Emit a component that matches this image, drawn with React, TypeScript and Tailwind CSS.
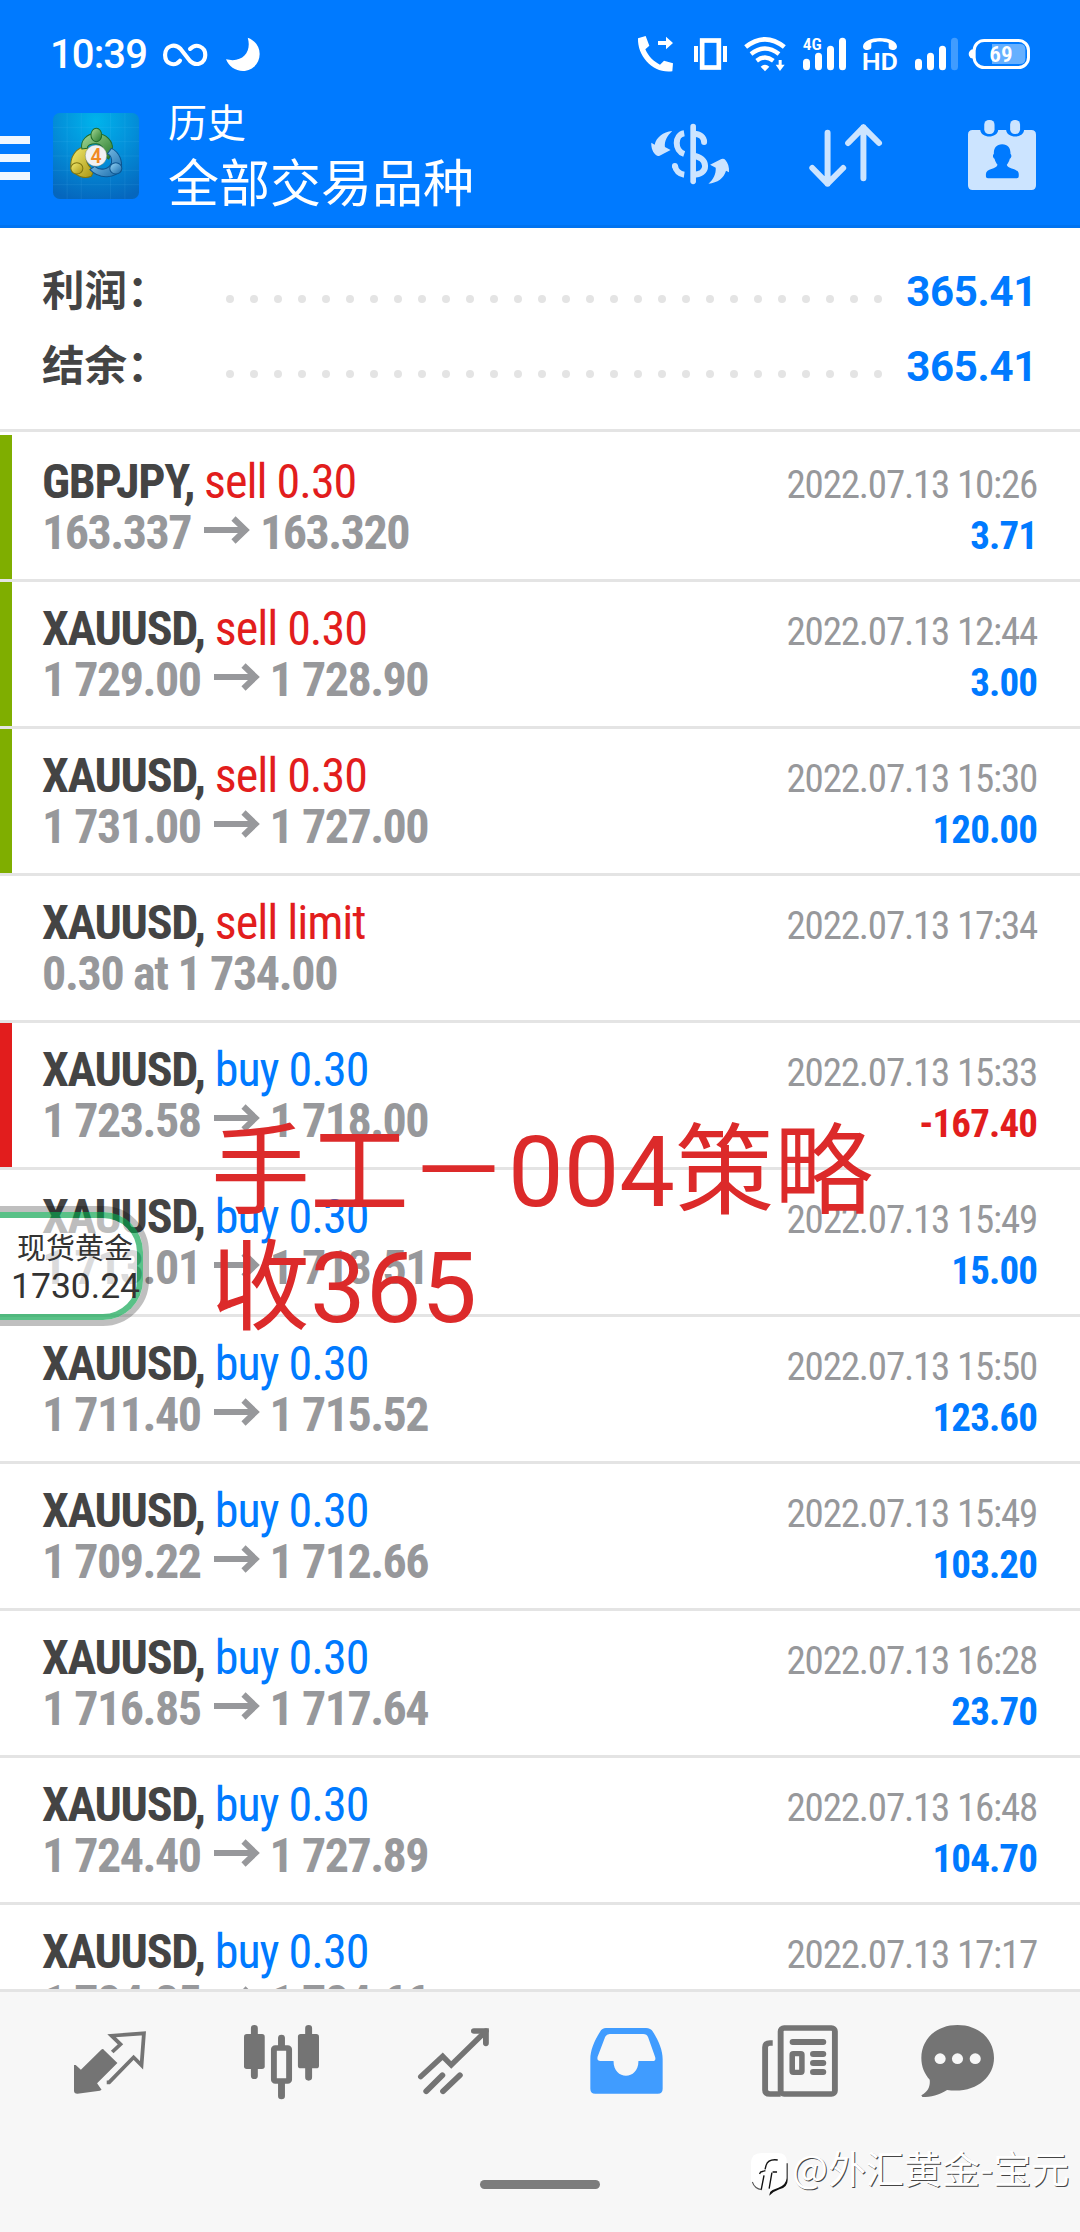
import { ReactNode } from "react";

type Deal = {
  symbol: string;
  action: string;
  side: "sell" | "buy";
  from: string;
  to?: string;
  time: string;
  profit?: string;
  mark?: "green" | "red";
};

const deals: Deal[] = [
  { symbol: "GBPJPY,", action: "sell 0.30", side: "sell", from: "163.337", to: "163.320", time: "2022.07.13 10:26", profit: "3.71", mark: "green" },
  { symbol: "XAUUSD,", action: "sell 0.30", side: "sell", from: "1 729.00", to: "1 728.90", time: "2022.07.13 12:44", profit: "3.00", mark: "green" },
  { symbol: "XAUUSD,", action: "sell 0.30", side: "sell", from: "1 731.00", to: "1 727.00", time: "2022.07.13 15:30", profit: "120.00", mark: "green" },
  { symbol: "XAUUSD,", action: "sell limit", side: "sell", from: "0.30 at 1 734.00", time: "2022.07.13 17:34" },
  { symbol: "XAUUSD,", action: "buy 0.30", side: "buy", from: "1 723.58", to: "1 718.00", time: "2022.07.13 15:33", profit: "-167.40", mark: "red" },
  { symbol: "XAUUSD,", action: "buy 0.30", side: "buy", from: "1 713.01", to: "1 713.51", time: "2022.07.13 15:49", profit: "15.00" },
  { symbol: "XAUUSD,", action: "buy 0.30", side: "buy", from: "1 711.40", to: "1 715.52", time: "2022.07.13 15:50", profit: "123.60" },
  { symbol: "XAUUSD,", action: "buy 0.30", side: "buy", from: "1 709.22", to: "1 712.66", time: "2022.07.13 15:49", profit: "103.20" },
  { symbol: "XAUUSD,", action: "buy 0.30", side: "buy", from: "1 716.85", to: "1 717.64", time: "2022.07.13 16:28", profit: "23.70" },
  { symbol: "XAUUSD,", action: "buy 0.30", side: "buy", from: "1 724.40", to: "1 727.89", time: "2022.07.13 16:48", profit: "104.70" },
  { symbol: "XAUUSD,", action: "buy 0.30", side: "buy", from: "1 724.35", to: "1 724.66", time: "2022.07.13 17:17" },
];

function Icon({ box, className, children }: { box: string; className: string; children: ReactNode }) {
  return (
    <svg viewBox={box} preserveAspectRatio="none" className={"block shrink-0 overflow-visible " + className} fill="none">
      {children}
    </svg>
  );
}

function StatusBar() {
  return (
    <div className="flex h-[108px] items-start pt-[35px] text-white">
      <span className="ml-[50px] w-[100px] whitespace-nowrap text-[40px] font-medium leading-[40px] tracking-[-0.9px]">10:39</span>
      <Icon box="475 105 127 120" className="ml-[13px] h-10 w-11">
        <path d="M524 182C508 202 481 192 481 165C481 138 508 128 526 147L553 183C571 201 597 190 597 165C597 140 571 128 553 147" stroke="#fff" strokeWidth="12" strokeLinecap="round" />
      </Icon>
      <Icon box="656 105 100 120" className="ml-[19px] h-10 w-[34px]">
        <path d="M720 113C742 121 755 141 755 162C755 191 733 213 706 213C683 213 664 199 656 178C706 190 732 156 720 113Z" fill="#fff" />
      </Icon>
      <Icon box="114 105 105 120" className="ml-[378px] h-10 w-[35px]">
        <path d="M114 115L137 108L148 137L136 148C146 170 160 184 180 194L192 182L219 190L217 214C160 222 112 170 114 115ZM174 123H198V110L219 129L198 148V135H174Z" fill="#fff" />
      </Icon>
      <Icon box="282 105 99 120" className="ml-[21px] h-10 w-[33px]">
        <path d="M282 138H294V186H282ZM369 138H381V186H369Z" fill="#fff" />
        <rect x="306.5" y="121.500" width="50" height="81" stroke="#fff" strokeWidth="14" />
      </Icon>
      <Icon box="432 105 126 120" className="ml-[17px] h-10 w-[42px]">
        <path d="M437 141Q495 95 553 141" stroke="#fff" strokeWidth="14" />
        <path d="M453 162Q495 129 537 162M470 182Q495 163 520 182" stroke="#fff" strokeWidth="13" />
        <path d="M482 200Q495 188 508 200L495 214ZM536 180H545V194H554L540 213L527 194H536Z" fill="#fff" />
      </Icon>
      <Icon box="609 105 129 120" className="ml-[17px] h-10 w-[43px]">
        <path d="M619.500 187V200M655.500 169V200M691.500 148V200M727.500 124V200" stroke="#fff" strokeWidth="21" strokeLinecap="round" />
        <text x="608" y="150" fill="#fff" fontSize="49" fontWeight="600" fontFamily="Roboto Condensed, sans-serif" textLength="57" lengthAdjust="spacingAndGlyphs">4G</text>
      </Icon>
      <Icon box="789 105 102 120" className="ml-[17px] h-10 w-[34px]">
        <path d="M789 140C789 105 891 105 891 140C891 153 866 153 866 142V129C850 123 830 123 814 129V142C814 153 789 153 789 140Z" fill="#fff" />
        <text x="785" y="210" fill="#fff" fontSize="73" fontWeight="600" fontFamily="Roboto, sans-serif" textLength="109" lengthAdjust="spacingAndGlyphs">HD</text>
      </Icon>
      <Icon box="945 105 129 120" className="ml-[18px] h-10 w-[43px]">
        <path d="M955.500 187V200M991.500 169V200M1027.500 148V200" stroke="#fff" strokeWidth="21" strokeLinecap="round" />
        <path d="M1063.500 124V200" stroke="#409cff" strokeWidth="21" strokeLinecap="round" />
      </Icon>
      <Icon box="1110 105 180 120" className="ml-3 h-10 w-[60px]">
        <path d="M1120 148A14 14 0 0 0 1120 176Z" fill="#fff" />
        <rect x="1122.500" y="121.500" width="163" height="81" rx="30" stroke="#fff" strokeWidth="9" />
        <path d="M1176 132H1260Q1276 132 1276 148V176Q1276 192 1260 192H1176Z" fill="#66b0ff" />
        <text x="1168" y="186" fill="#fff" fontSize="68" fontWeight="600" fontFamily="Roboto Condensed, sans-serif" textLength="70" lengthAdjust="spacingAndGlyphs">69</text>
      </Icon>
    </div>
  );
}

function AppLogo() {
  return (
    <Icon box="10 14 256 258" className="h-[86px] w-[86px]">
      <defs>
        <radialGradient id="tile" cx="0.5" cy="0.1" r="0.95">
          <stop offset="0" stopColor="#00b4ec" />
          <stop offset="0.45" stopColor="#0391da" />
          <stop offset="1" stopColor="#0566bd" />
        </radialGradient>
        <linearGradient id="green" x1="0" y1="0" x2="1" y2="1">
          <stop offset="0" stopColor="#a9dc9a" />
          <stop offset="1" stopColor="#23772a" />
        </linearGradient>
        <linearGradient id="yellow" x1="0" y1="0" x2="1" y2="1">
          <stop offset="0" stopColor="#f6ee72" />
          <stop offset="1" stopColor="#a79412" />
        </linearGradient>
        <linearGradient id="blue" x1="0" y1="0" x2="1" y2="1">
          <stop offset="0" stopColor="#9ad8f8" />
          <stop offset="1" stopColor="#1266a8" />
        </linearGradient>
      </defs>
      <rect x="10" y="14" width="256" height="258" rx="20" fill="url(#tile)" />
      <path d="M52 14V272M94 14V272M181 14V272M224 14V272M10 57H266M10 100H266M10 143H266M10 186H266M10 229H266" stroke="#7fd0ff" strokeOpacity="0.16" strokeWidth="2" />
      <g strokeWidth="3">
        <path d="M64 182C58 145 80 116 112 114L120 132C104 142 104 166 132 188L124 204C105 212 80 206 64 182Z" fill="url(#yellow)" stroke="#7d7410" />
        <path d="M96 122C90 96 112 76 138 74C168 76 190 98 187 124L176 152L158 140C166 120 152 106 138 106C122 106 112 112 112 120Z" fill="url(#green)" stroke="#1e6b2a" />
        <path d="M184 120C208 132 218 158 213 184C196 208 150 216 120 184L134 174C150 188 176 184 184 164C186 150 180 140 172 136Z" fill="url(#blue)" stroke="#0d5590" />
        <ellipse cx="139" cy="80" rx="16" ry="20" fill="url(#green)" stroke="#1e6b2a" />
        <ellipse cx="81" cy="180" rx="18" ry="17" fill="url(#yellow)" stroke="#7d7410" />
        <ellipse cx="197" cy="180" rx="18" ry="17" fill="url(#blue)" stroke="#0d5590" />
      </g>
      <circle cx="138" cy="142" r="32" fill="#f1f1f3" stroke="#3d5c44" strokeOpacity="0.5" strokeWidth="2" />
      <text x="138" y="163" textAnchor="middle" fill="#f08a24" fontSize="58" fontWeight="600" fontFamily="Roboto, sans-serif">4</text>
    </Icon>
  );
}

function TitleBar() {
  return (
    <div className="flex h-[117px] items-start text-white">
      <div className="mt-7 flex w-[30px] flex-col gap-[10px]">
        <div className="h-2 bg-[#f0f7ff]" />
        <div className="h-2 bg-[#f0f7ff]" />
        <div className="h-2 bg-[#f0f7ff]" />
      </div>
      <div className="ml-[23px] mt-[5px]">
        <AppLogo />
      </div>
      <div className="ml-[29px] flex w-[320px] flex-col whitespace-nowrap font-['Noto_Sans_CJK_SC',sans-serif]">
        <span className="-mt-[7px] text-[39px] leading-[39px]">历史</span>
        <span className="mt-[15px] text-[51px] leading-[51px]">全部交易品种</span>
      </div>
      <Icon box="152 360 235 216" className="ml-[163px] mt-3 h-[72px] w-[78px]">
        <path d="M279 380V544" stroke="#cce4ff" strokeWidth="17" strokeLinecap="round" />
        <path d="M252 400C222 405 222 452 252 462M224 496C226 512 238 522 252 524M279 401C300 400 312 412 312 426M279 467C302 470 315 482 315 498C315 514 302 524 279 524" stroke="#cce4ff" strokeWidth="18" />
        <circle cx="312" cy="426" r="9" fill="#cce4ff" />
        <circle cx="224" cy="498" r="9" fill="#cce4ff" />
        <path d="M216 393C188 396 168 412 163 434L153 428C152 444 158 458 168 466Q172 469 178 467L211 450L194 441C192 424 200 408 216 393ZM325 551C353 548 372 534 378 512L387 517C388 501 384 489 376 480Q372 475 364 477L330 494L347 503C348 521 341 537 325 551Z" fill="#cce4ff" />
      </Icon>
      <Icon box="628 360 220 216" className="ml-20 mt-3 h-[72px] w-[73px]">
        <path d="M684 398V551M638 504L684 551L731 504M792 535V382M746 429L792 382L839 429" stroke="#cce4ff" strokeWidth="18" strokeLinecap="round" strokeLinejoin="round" />
      </Icon>
      <Icon box="1103 357 205 216" className="ml-[86px] mt-[11px] h-[72px] w-[68px]">
        <path d="M1117 390H1140C1142 416 1192 416 1194 390H1218C1220 416 1270 416 1272 390H1294Q1308 390 1308 404V556Q1308 570 1294 570H1117Q1103 570 1103 556V404Q1103 390 1117 390Z" fill="#cce4ff" />
        <rect x="1152" y="360" width="31" height="42" rx="14" fill="#cce4ff" />
        <rect x="1230" y="360" width="30" height="42" rx="14" fill="#cce4ff" />
        <path d="M1206 433C1224 433 1232 446 1231 462C1235 464 1235 474 1229 476C1227 484 1223 490 1220 494C1222 508 1256 504 1256 522V529Q1256 535 1250 535H1163Q1157 535 1157 529V522C1157 504 1190 508 1192 494C1189 490 1185 484 1183 476C1177 474 1177 464 1181 462C1180 446 1188 433 1206 433Z" fill="#007aff" />
      </Icon>
    </div>
  );
}

function Summary() {
  return (
    <div className="flex h-[204px] flex-col border-b-[3px] border-[#e4e4e4] pt-[24px]">
      {["利润：", "结余："].map((label) => (
        <div key={label} className="flex h-[75px] items-center pl-[42px] pr-[43px]">
          <span className="-mt-[5px] w-[184px] whitespace-nowrap font-['Noto_Sans_CJK_SC',sans-serif] text-[42.5px] font-bold leading-[75px] text-[#444]">{label}</span>
          <div className="mt-[19px] flex gap-4">
            {Array.from({ length: 28 }, (_, i) => (
              <i key={i} className="h-2 w-2 rounded-full bg-[#e4e4e4]" />
            ))}
          </div>
          <span className="ml-auto mt-[3px] text-[42px] font-bold leading-[75px] tracking-[-0.3px] text-[#007aff]">365.41</span>
        </div>
      ))}
    </div>
  );
}

function DealRow({ deal, first }: { deal: Deal; first: boolean }) {
  const tone = deal.side === "sell" ? "text-[#e21d1d]" : "text-[#007aff]";
  const mark = deal.mark === "green" ? "bg-[#7fae00]" : deal.mark === "red" ? "bg-[#e21d1d]" : "bg-transparent";
  const profitTone = deal.profit?.startsWith("-") ? "text-[#e21d1d]" : "text-[#007aff]";
  return (
    <div className={"flex h-[147px] shrink-0 border-b-[3px] border-[#e4e4e4] font-['Roboto_Condensed',sans-serif] " + (first ? "mt-[3px]" : "")}>
      <div className={"w-3 " + mark} />
      <div className="flex flex-1 flex-col whitespace-nowrap pl-[30px] pr-[43px] pt-[21px]">
        <div className="flex h-[51px] items-baseline text-[48px] leading-[51px]">
          <span className="font-bold tracking-[-1.3px] text-[#444]">{deal.symbol}</span>
          <span className={"ml-[10px] tracking-[-1px] " + tone}>{deal.action}</span>
          <span className="ml-auto text-[39px] tracking-[-1.2px] text-[#97989b]">{deal.time}</span>
        </div>
        <div className="flex h-[51px] items-baseline text-[48px] font-bold leading-[51px] text-[#97989b]">
          <span className={deal.to ? "tracking-[-1.5px]" : "tracking-[-1.35px]"}>{deal.from}</span>
          {deal.to && (
            <>
              <Icon box="0 0 46 32" className="ml-[13px] mr-[10px] h-8 w-[46px]">
                <path d="M0 13H42M29.500 1.500L41.500 13L29.500 24.500" stroke="#97989b" strokeWidth="6" />
              </Icon>
              <span className="tracking-[-1.5px]">{deal.to}</span>
            </>
          )}
          <span className={"ml-auto text-[39px] tracking-[-0.9px] " + profitTone}>{deal.profit}</span>
        </div>
      </div>
    </div>
  );
}

function NavBar() {
  return (
    <div className="flex h-[243px] flex-col border-t-[3px] border-[#e4e4e4] bg-[#f7f7f7]">
      <div className="flex pl-[74px] pt-[33px]">
        <Icon box="215 375 209 225" className="h-[75px] w-[72px]">
          <path d="M299 447L341 489L282 550L295 569L290 572L225 581Q215 581 215 572V495H220L235 509L294 449Q299 445 303 450Z" fill="#747474" />
          <path d="M326 456L350 433L324 407L418 400L411 496L388 472L317 547H310" stroke="#747474" strokeWidth="11" />
        </Icon>
        <Icon box="709 375 217 225" className="ml-[98px] h-[75px] w-[75px]">
          <path d="M739 385V527M896 385V532M817.500 414V440M817.500 550V588" stroke="#747474" strokeWidth="20" strokeLinecap="round" />
          <rect x="709" y="402" width="60" height="105" rx="8" fill="#747474" />
          <rect x="865" y="402" width="61" height="103" rx="8" fill="#747474" />
          <rect x="795.500" y="444" width="44" height="99" rx="4" stroke="#747474" strokeWidth="17" />
        </Icon>
        <Icon box="1213 375 207 225" className="ml-[99px] h-[75px] w-[71px]">
          <path d="M1221 530L1285 469L1310 495L1411 393" stroke="#747474" strokeWidth="16" strokeLinecap="round" />
          <path d="M1376 393H1411V430M1237 574L1284 526M1286 574L1335 526" stroke="#747474" strokeWidth="17" strokeLinecap="round" />
        </Icon>
        <Icon box="146 375 211 225" className="ml-[101px] h-[75px] w-[73px]">
          <path fillRule="evenodd" d="M192 384H308Q321 384 328 395C346 426 356 452 356 478V566Q356 581 342 581H161Q147 581 147 566V478C147 452 157 426 175 395Q181 384 192 384ZM203 402Q194 402 190 410L168 470Q165 483 176 483H214C214 542 286 542 286 483H327Q338 483 334 470L314 412Q310 402 300 402Z" fill="#409cff" />
        </Icon>
        <Icon box="645 375 220 225" className="ml-[99px] h-[75px] w-[76px]">
          <rect x="699" y="384" width="157" height="198" rx="10" stroke="#747474" strokeWidth="17" />
          <path d="M676 429H668Q654 429 654 442V570Q654 582 668 582H699" stroke="#747474" strokeWidth="17" />
          <path d="M734 426H822M793 462H822M793 489H822M793 516H822" stroke="#747474" strokeWidth="18" strokeLinecap="round" />
          <rect x="732.500" y="461" width="28" height="56" rx="3" stroke="#747474" strokeWidth="16" />
        </Icon>
        <Icon box="1108 375 210 225" className="ml-[83px] h-[75px] w-[73px]">
          <path d="M1213 375C1274 375 1318 417 1318 474C1318 534 1262 582 1183 570C1160 586 1136 591 1112 591L1109 586C1129 574 1135 558 1133 539C1118 522 1109 500 1109 474C1109 417 1152 375 1213 375Z" fill="#747474" />
          <circle cx="1163" cy="476" r="16" fill="#f7f7f7" />
          <circle cx="1213" cy="476" r="16" fill="#f7f7f7" />
          <circle cx="1264" cy="476" r="16" fill="#f7f7f7" />
        </Icon>
      </div>
      <div className="mt-20 h-[9px] w-[120px] self-center rounded-full bg-[#7c7c7c]" />
    </div>
  );
}

function Watermark() {
  return (
    <div className="absolute left-[751px] top-[2136px] flex items-start whitespace-nowrap">
      <Icon box="612 750 108 138" className="mt-[14px] h-[46px] w-[37px]">
        <path d="M719 790V840Q719 862 695 868Q678 874 665 887L670 868L690 850L712 790Z" fill="#111" />
        <path d="M642 759H690Q719 759 716 790V835Q714 856 692 863Q675 868 664 878L666 866H640Q612 866 612 836V790Q612 759 642 759Z" fill="#fff" />
        <path d="M616 846Q622 866 644 869" stroke="#555" strokeWidth="3" />
        <path d="M690 780Q662 776 656 796L653 808M650 826L642 868M637 822L640 816L654 812M675 816H688M673 818L665 866" stroke="#111" strokeWidth="4" />
      </Icon>
      <span className="ml-1 font-['Noto_Sans_CJK_SC',sans-serif] text-[38px] font-normal leading-[62px] text-white [text-shadow:1px_1px_0_#444]">@外汇黄金-宝元</span>
    </div>
  );
}

export default function App() {
  return (
    <div className="relative flex h-[2232px] w-[1080px] flex-col overflow-hidden bg-white font-['Roboto',sans-serif]">
      <header className="h-[228px] border-b-[3px] border-[#0073f0] bg-[#007aff]">
        <StatusBar />
        <TitleBar />
      </header>
      <Summary />
      <main className="flex h-[1557px] flex-col overflow-hidden">
        {deals.map((deal, i) => (
          <DealRow key={deal.time + i} deal={deal} first={i === 0} />
        ))}
      </main>
      <NavBar />
      <Watermark />
      <div className="absolute -left-12 top-[1206px] h-[120px] w-[197px] rounded-[46px] border-[6px] border-black/25">
        <div className="flex h-full w-full flex-col rounded-[40px] border-[6px] border-[rgba(0,160,70,0.65)] bg-white/65 bg-clip-padding pl-[47px] text-[#333]">
          <span className="mt-[14px] whitespace-nowrap pl-[6px] font-['Noto_Sans_CJK_SC',sans-serif] text-[29px] leading-[29px]">现货黄金</span>
          <span className="mt-[5px] whitespace-nowrap text-[35.5px] leading-[40px]">1730.24</span>
        </div>
      </div>
      <p className="absolute left-[211px] top-[1114px] whitespace-pre font-['Roboto','Noto_Sans_CJK_SC',sans-serif] text-[99px] leading-[116px] text-[#dc2a2a]">{"手工－004策略\n收365"}</p>
    </div>
  );
}
